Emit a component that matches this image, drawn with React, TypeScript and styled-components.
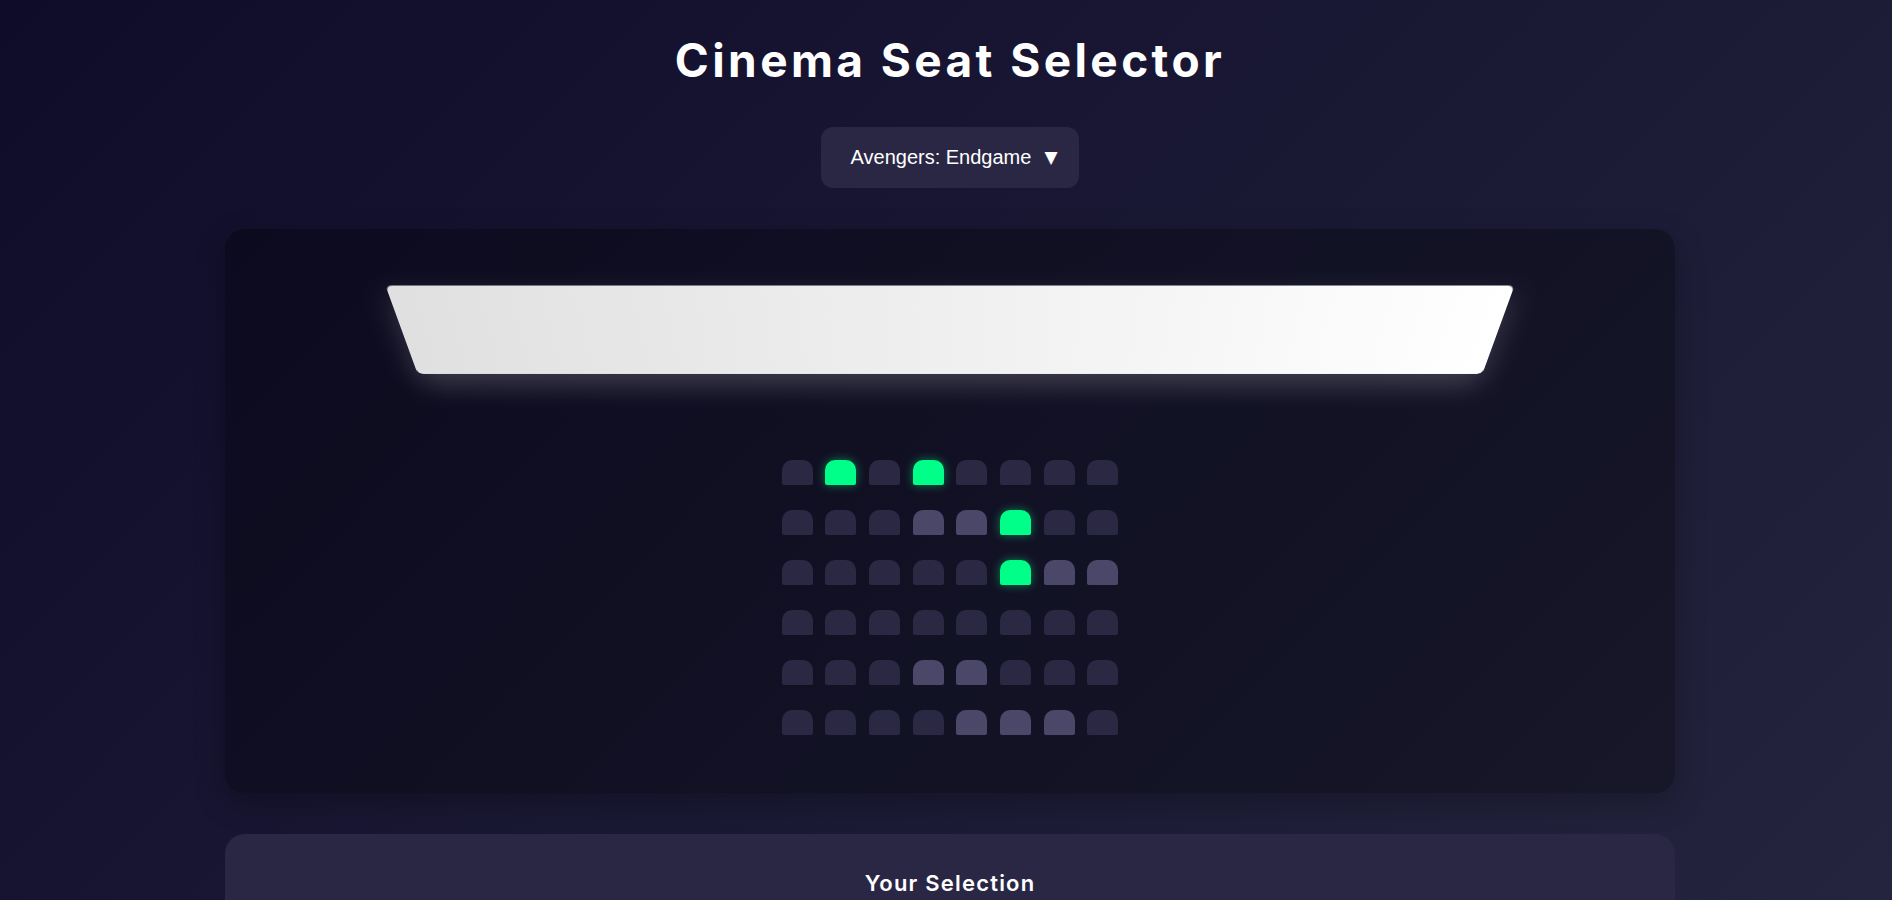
import React from "react";
import styled, { createGlobalStyle } from "styled-components";

const GlobalStyle = createGlobalStyle`
  html, body {
    margin: 0;
    padding: 0;
  }
  body {
    min-height: 100vh;
    background: linear-gradient(135deg, #0f0c29 0%, #24243e 100%) fixed;
    color: #ffffff;
    font-family: "Inter", "Liberation Sans", sans-serif;
  }
`;

type SeatState = "empty" | "occupied" | "selected";

const E: SeatState = "empty";
const O: SeatState = "occupied";
const S: SeatState = "selected";

const layout: SeatState[][] = [
  [E, S, E, S, E, E, E, E],
  [E, E, E, O, O, S, E, E],
  [E, E, E, E, E, S, O, O],
  [E, E, E, E, E, E, E, E],
  [E, E, E, O, O, E, E, E],
  [E, E, E, E, O, O, O, E],
];

const Page = styled.div`
  display: flex;
  flex-direction: column;
  align-items: center;
  padding: 33px 0 60px 8px;
  box-sizing: border-box;
`;

const Title = styled.h1`
  margin: 0;
  font-family: "Inter", "Liberation Sans", sans-serif;
  font-weight: 700;
  font-size: 46px;
  line-height: 1.2;
  letter-spacing: 3.4px;
  color: #ffffff;
  text-align: center;
`;

const MovieSelect = styled.button`
  margin-top: 39px;
  height: 61px;
  display: inline-flex;
  align-items: center;
  gap: 13px;
  padding: 0 22px 0 30px;
  border: none;
  border-radius: 12px;
  background: #2a2745;
  color: #ffffff;
  font-family: "Liberation Sans", Arial, sans-serif;
  font-size: 20px;
  cursor: pointer;
`;

const Caret = styled.span`
  font-family: "DejaVu Sans", sans-serif;
  font-size: 17px;
  line-height: 1;
`;

const Theatre = styled.section`
  margin-top: 41px;
  width: 1450px;
  box-sizing: border-box;
  padding: 40px;
  border-radius: 20px;
  background: rgba(0, 0, 0, 0.3);
  box-shadow: 0 10px 30px rgba(0, 0, 0, 0.25);
  display: flex;
  flex-direction: column;
  align-items: center;
`;

const Screen = styled.div`
  width: 80%;
  height: 100px;
  margin: 12px 0 79px;
  border-radius: 6px;
  background: linear-gradient(to right, #e0e0e0, #ffffff);
  transform: perspective(800px) rotateX(-28deg);
  box-shadow: 0 14px 30px rgba(255, 255, 255, 0.18);
`;

const SeatGrid = styled.div`
  display: grid;
  grid-template-columns: repeat(8, 31px);
  grid-auto-rows: 25px;
  column-gap: 12.7px;
  row-gap: 25px;
  margin-bottom: 18px;
`;

const Seat = styled.div<{ $state: SeatState }>`
  border-radius: 10px 10px 2px 2px;
  background: ${({ $state }) =>
    $state === "selected" ? "#00ff88" : $state === "occupied" ? "#4a4768" : "#2a2843"};
  box-shadow: ${({ $state }) =>
    $state === "selected" ? "0 0 10px rgba(0, 255, 136, 0.45)" : "none"};
  cursor: ${({ $state }) => ($state === "occupied" ? "not-allowed" : "pointer")};
`;

const Summary = styled.section`
  margin-top: 41px;
  width: 1450px;
  box-sizing: border-box;
  padding: 33px 40px 40px;
  border-radius: 20px;
  background: #2a2745;
  text-align: center;
`;

const SummaryTitle = styled.h3`
  margin: 0 0 48px;
  font-family: "Inter", "Liberation Sans", sans-serif;
  font-weight: 600;
  font-size: 22px;
  line-height: 1.5;
  letter-spacing: 1.2px;
  color: #ffffff;
`;

const SummaryText = styled.p`
  margin: 0;
  font-size: 16px;
  color: #b9b6d3;
`;

export default function App() {
  const rowLetters = "ABCDEF";
  const selected: string[] = [];
  layout.forEach((row, r) =>
    row.forEach((s, c) => {
      if (s === "selected") selected.push(`${rowLetters[r]}${c + 1}`);
    })
  );

  return (
    <>
      <GlobalStyle />
      <Page>
        <Title>Cinema Seat Selector</Title>
        <MovieSelect>
          Avengers: Endgame <Caret>▼</Caret>
        </MovieSelect>
        <Theatre>
          <Screen />
          <SeatGrid>
            {layout.map((row, r) =>
              row.map((state, c) => <Seat key={`${r}-${c}`} $state={state} />)
            )}
          </SeatGrid>
        </Theatre>
        <Summary>
          <SummaryTitle>Your Selection</SummaryTitle>
          <SummaryText>Seats: {selected.join(", ")}</SummaryText>
        </Summary>
      </Page>
    </>
  );
}
